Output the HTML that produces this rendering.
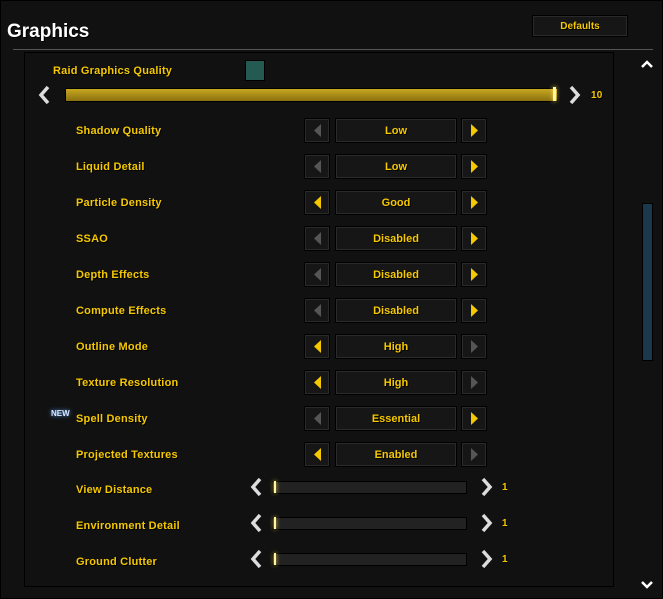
<!DOCTYPE html><html><head><style>
body{margin:0;width:663px;height:599px;background:#111;position:relative;overflow:hidden;font-family:"Liberation Sans",sans-serif;}
.a{position:absolute}
.lbl{position:absolute;color:#f5c800;font-size:11px;font-weight:bold;text-shadow:1px 1px 0 #000;letter-spacing:.2px;white-space:nowrap}
.box{position:absolute;background:#161616;border:1px solid #000;box-shadow:inset 0 0 0 1px #2a2a2a}
.val{color:#f5c800;font-size:11px;font-weight:bold;text-align:center;line-height:24px;text-shadow:1px 1px 0 #000}
</style></head><body>
<div class="a" style="left:0;top:0;width:661px;height:597px;border:1px solid #000"></div>
<div class="a" style="left:7px;top:21px;color:#fff;font-size:19px;font-weight:bold;text-shadow:1px 1px 0 #000">Graphics</div>
<div class="box" style="left:532px;top:15px;width:94px;height:20px"><div class="val" style="line-height:22px;font-size:10px">Defaults</div></div>
<div class="a" style="left:13px;top:49px;width:640px;height:1px;background:#555"></div>
<div class="a" style="left:24px;top:52px;width:588px;height:533px;border:1px solid #000"></div>
<div class="a" style="left:642px;top:203px;width:9px;height:156px;background:#1a394c;border:1px solid #000"></div>
<svg class="a" style="left:640px;top:60px" width="14" height="10"><path d="M2 7 L7 2 L12 7" stroke="#fff" stroke-width="2.5" fill="none"/></svg>
<svg class="a" style="left:640px;top:580px" width="14" height="10"><path d="M2 2 L7 7 L12 2" stroke="#fff" stroke-width="2.5" fill="none"/></svg>
<div class="lbl" style="left:53px;top:65px">Raid Graphics Quality</div>
<div class="a" style="left:245px;top:60px;width:18px;height:19px;background:#245a52;border:1px solid #000"></div>
<svg class="a" style="left:38px;top:85px" width="13" height="20"><path d="M10 2 L3 10 L10 18" stroke="#ddd" stroke-width="3.5" fill="none"/></svg>
<div class="a" style="left:65px;top:88px;width:491px;height:12px;border:1px solid #000;background:linear-gradient(#c8a820,#8a7010)"></div>
<div class="a" style="left:553px;top:87px;width:3px;height:14px;background:#fff6a0;box-shadow:0 0 4px #ffe060"></div>
<svg class="a" style="left:568px;top:85px" width="13" height="20"><path d="M3 2 L10 10 L3 18" stroke="#ddd" stroke-width="3.5" fill="none"/></svg>
<div class="lbl" style="left:591px;top:90px;font-size:10px">10</div>
<div id="rows"></div>
<div class="a" style="left:51px;top:409px;color:#dfe8ff;font-size:8px;font-weight:bold;text-shadow:0 0 4px #5af">NEW</div>
<script>
var rows=[["Shadow Quality","Low",0,1],["Liquid Detail","Low",0,1],["Particle Density","Good",1,1],["SSAO","Disabled",0,1],["Depth Effects","Disabled",0,1],["Compute Effects","Disabled",0,1],["Outline Mode","High",1,0],["Texture Resolution","High",1,0],["Spell Density","Essential",0,1],["Projected Textures","Enabled",1,0]];
var h="";
rows.forEach(function(r,i){var y=118+i*36;
h+='<div class="lbl" style="left:76px;top:'+(y+7)+'px">'+r[0]+'</div>';
h+='<div class="box" style="left:304px;top:'+y+'px;width:24px;height:23px"><svg width="24" height="23"><path d="M16 5 L9 11.5 L16 18Z" fill="'+(r[2]?'#f5c800':'#555')+'"/></svg></div>';
h+='<div class="box" style="left:335px;top:'+y+'px;width:120px;height:23px"><div class="val">'+r[1]+'</div></div>';
h+='<div class="box" style="left:461px;top:'+y+'px;width:24px;height:23px"><svg width="24" height="23"><path d="M9 5 L16 11.5 L9 18Z" fill="'+(r[3]?'#f5c800':'#555')+'"/></svg></div>';});
["View Distance","Environment Detail","Ground Clutter"].forEach(function(n,i){var y=487+i*36;
h+='<div class="lbl" style="left:76px;top:'+(y-3)+'px">'+n+'</div>';
h+='<svg class="a" style="left:250px;top:'+(y-10)+'px" width="13" height="20"><path d="M10 2 L3 10 L10 18" stroke="#ddd" stroke-width="3.5" fill="none"/></svg>';
h+='<div class="a" style="left:272px;top:'+(y-6)+'px;width:193px;height:11px;background:#222;border:1px solid #000"></div>';
h+='<div class="a" style="left:274px;top:'+(y-6)+'px;width:2px;height:12px;background:#fff6a0;box-shadow:0 0 4px #ffe060"></div>';
h+='<svg class="a" style="left:480px;top:'+(y-10)+'px" width="13" height="20"><path d="M3 2 L10 10 L3 18" stroke="#ddd" stroke-width="3.5" fill="none"/></svg>';
h+='<div class="lbl" style="left:502px;top:'+(y-5)+'px;font-size:10px">1</div>';});
document.getElementById("rows").innerHTML=h;
</script>
</body></html>
